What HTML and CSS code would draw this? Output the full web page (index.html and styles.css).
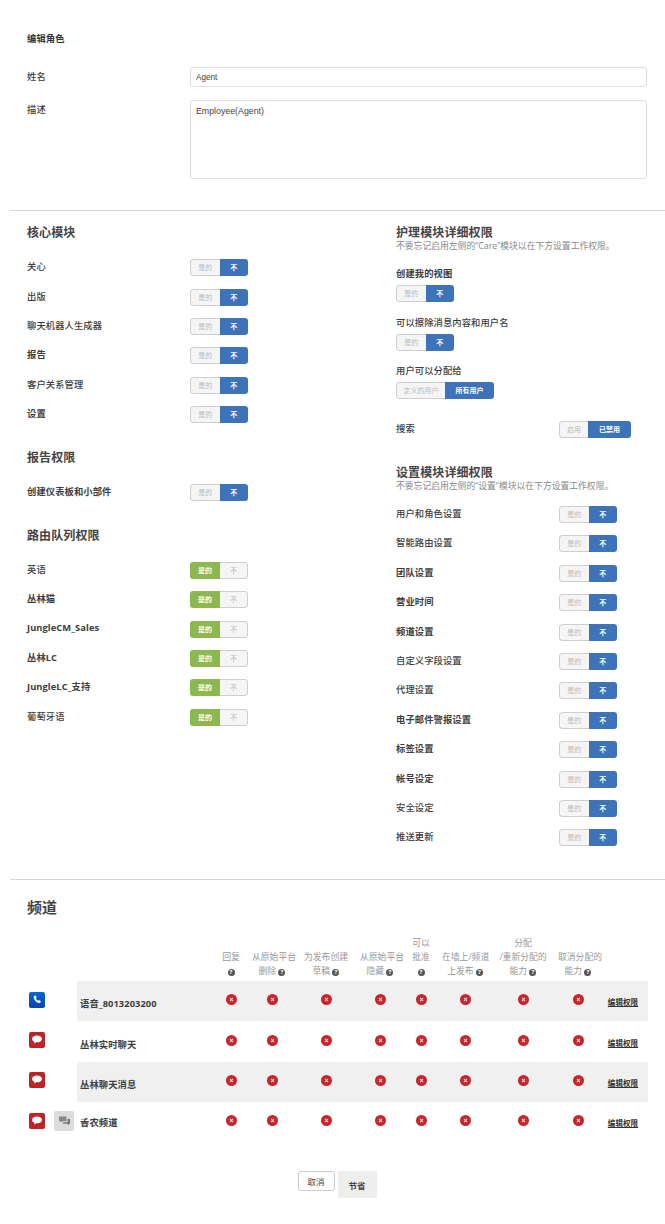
FILE: index.html
```html
<!DOCTYPE html>
<html lang="zh-CN">
<head>
    <meta charset="UTF-8">
    <meta name="viewport" content="width=device-width, initial-scale=1.0">
    <title>编辑角色</title>
    <link rel="stylesheet" href="styles.css">
</head>
<body>
    <div class="role-form">
        <h1 class="page-title">编辑角色</h1>
        <div class="form-row">
            <label>姓名</label>
            <input type="text" value="Agent">
        </div>
        <div class="form-row">
            <label>描述</label>
            <textarea>Employee(Agent)</textarea>
        </div>
    </div>

    <div class="perms">
        <div class="perm-col">
            <div class="group">
                <h2>核心模块</h2>
                <div class="row"><span>关心</span><div class="toggle"><span class="off">是的</span><span class="on">不</span></div></div>
                <div class="row"><span>出版</span><div class="toggle"><span class="off">是的</span><span class="on">不</span></div></div>
                <div class="row"><span>聊天机器人生成器</span><div class="toggle"><span class="off">是的</span><span class="on">不</span></div></div>
                <div class="row"><span class="b">报告</span><div class="toggle"><span class="off">是的</span><span class="on">不</span></div></div>
                <div class="row"><span>客户关系管理</span><div class="toggle"><span class="off">是的</span><span class="on">不</span></div></div>
                <div class="row"><span class="b">设置</span><div class="toggle"><span class="off">是的</span><span class="on">不</span></div></div>
            </div>
            <div class="group">
                <h2>报告权限</h2>
                <div class="row"><span class="b">创建仪表板和小部件</span><div class="toggle"><span class="off">是的</span><span class="on">不</span></div></div>
            </div>
            <div class="group">
                <h2>路由队列权限</h2>
                <div class="row"><span>英语</span><div class="toggle"><span class="yes">是的</span><span class="off">不</span></div></div>
                <div class="row"><span class="b">丛林猫</span><div class="toggle"><span class="yes">是的</span><span class="off">不</span></div></div>
                <div class="row"><span class="b">JungleCM_Sales</span><div class="toggle"><span class="yes">是的</span><span class="off">不</span></div></div>
                <div class="row"><span class="b">丛林LC</span><div class="toggle"><span class="yes">是的</span><span class="off">不</span></div></div>
                <div class="row"><span class="b">JungleLC_支持</span><div class="toggle"><span class="yes">是的</span><span class="off">不</span></div></div>
                <div class="row"><span>葡萄牙语</span><div class="toggle"><span class="yes">是的</span><span class="off">不</span></div></div>
            </div>
        </div>

        <div class="perm-col">
            <h2>护理模块详细权限</h2>
            <p class="hint">不要忘记启用左侧的“Care”模块以在下方设置工作权限。</p>
            <div class="stack first">
                <div class="stack-label b">创建我的视图</div>
                <div class="toggle"><span class="off">是的</span><span class="on">不</span></div>
            </div>
            <div class="stack">
                <div class="stack-label">可以擦除消息内容和用户名</div>
                <div class="toggle"><span class="off">是的</span><span class="on">不</span></div>
            </div>
            <div class="stack">
                <div class="stack-label">用户可以分配给</div>
                <div class="toggle wide"><span class="off">定义的用户</span><span class="on">所有用户</span></div>
            </div>
            <div class="row search-row"><span>搜索</span><div class="toggle mid"><span class="off">启用</span><span class="on">已禁用</span></div></div>

            <h2 class="settings-title">设置模块详细权限</h2>
            <p class="hint">不要忘记启用左侧的“设置”模块以在下方设置工作权限。</p>
            <div class="settings-rows">
                <div class="row"><span>用户和角色设置</span><div class="toggle"><span class="off">是的</span><span class="on">不</span></div></div>
                <div class="row"><span>智能路由设置</span><div class="toggle"><span class="off">是的</span><span class="on">不</span></div></div>
                <div class="row"><span class="b">团队设置</span><div class="toggle"><span class="off">是的</span><span class="on">不</span></div></div>
                <div class="row"><span class="b">营业时间</span><div class="toggle"><span class="off">是的</span><span class="on">不</span></div></div>
                <div class="row"><span class="b">频道设置</span><div class="toggle"><span class="off">是的</span><span class="on">不</span></div></div>
                <div class="row"><span>自定义字段设置</span><div class="toggle"><span class="off">是的</span><span class="on">不</span></div></div>
                <div class="row"><span>代理设置</span><div class="toggle"><span class="off">是的</span><span class="on">不</span></div></div>
                <div class="row"><span class="b">电子邮件警报设置</span><div class="toggle"><span class="off">是的</span><span class="on">不</span></div></div>
                <div class="row"><span class="b">标签设置</span><div class="toggle"><span class="off">是的</span><span class="on">不</span></div></div>
                <div class="row"><span class="b">帐号设定</span><div class="toggle"><span class="off">是的</span><span class="on">不</span></div></div>
                <div class="row"><span>安全设定</span><div class="toggle"><span class="off">是的</span><span class="on">不</span></div></div>
                <div class="row"><span>推送更新</span><div class="toggle"><span class="off">是的</span><span class="on">不</span></div></div>
            </div>
        </div>
    </div>

    <div class="channels">
        <h2 class="channels-title">频道</h2>
        <table>
            <colgroup>
                <col class="c-icon"><col class="c-icon2"><col class="c-name">
                <col class="c-a"><col class="c-b"><col class="c-c"><col class="c-d"><col class="c-e"><col class="c-f"><col class="c-g"><col class="c-h"><col class="c-link">
            </colgroup>
            <thead>
                <tr>
                    <th></th><th></th><th></th>
                    <th>回复<br><i class="q">?</i></th>
                    <th>从原始平台<br>删除 <i class="q">?</i></th>
                    <th>为发布创建<br>草稿 <i class="q">?</i></th>
                    <th>从原始平台<br>隐藏 <i class="q">?</i></th>
                    <th>可以<br>批准<br><i class="q">?</i></th>
                    <th>在墙上/频道<br>上发布 <i class="q">?</i></th>
                    <th>分配<br>/重新分配的<br>能力 <i class="q">?</i></th>
                    <th>取消分配的<br>能力 <i class="q">?</i></th>
                    <th></th>
                </tr>
            </thead>
            <tbody id="channelRows"></tbody>
        </table>
        <div class="actions">
            <button class="btn-cancel">取消</button>
            <button class="btn-save">节省</button>
        </div>
    </div>

    <script src="channels.js"></script>
</body>
</html>
```

FILE: styles.css
```css
* {
    margin: 0;
    padding: 0;
    box-sizing: border-box;
}

body {
    background: #fff;
    color: #3d3d3d;
    font-family: "Open Sans", "Noto Sans CJK SC", sans-serif;
    font-size: 9.3px;
    font-weight: 500;
    letter-spacing: 0.08px;
    padding-left: 10px;
}

.b {
    font-weight: 700;
}

h2 {
    font-size: 12px;
    line-height: 16px;
    font-weight: 700;
    color: #444;
    letter-spacing: 0.1px;
}

.role-form {
    padding: 32px 18px 31px 17px;
    border-bottom: 1px solid #d9d9d9;
}

.page-title {
    font-size: 9.3px;
    line-height: 14px;
    font-weight: 700;
    color: #333;
    margin-bottom: 21px;
}

.form-row {
    display: flex;
    margin-bottom: 13px;
}

.form-row:last-child {
    margin-bottom: 0;
}

.form-row label {
    width: 163px;
    line-height: 20px;
}

.form-row input,
.form-row textarea {
    flex: 1;
    border: 1px solid #ddd;
    border-radius: 3px;
    font-family: "Liberation Sans", Arial, sans-serif;
    color: #444;
    letter-spacing: 0;
    padding: 0 5px;
    resize: none;
    outline: none;
}

.form-row input {
    height: 20px;
    font-size: 8.2px;
}

.form-row textarea {
    height: 79px;
    padding-top: 4px;
    font-size: 8.8px;
    line-height: 12px;
}

.perms {
    display: flex;
    padding: 14px 0 26.5px 17px;
    border-bottom: 1px solid #d9d9d9;
}

.perm-col:first-child {
    width: 369px;
}

.perm-col:last-child {
    width: 235px;
}

.group {
    margin-bottom: 20.5px;
    width: 221px;
}

.group h2 {
    margin-bottom: 12px;
}

.row {
    display: flex;
    align-items: center;
    justify-content: space-between;
    height: 29.4px;
}

.row > span {
    margin-bottom: 3px;
}

.hint {
    font-size: 8.8px;
    line-height: 11px;
    font-weight: 400;
    color: #888;
    white-space: nowrap;
    letter-spacing: 0;
}

.toggle {
    display: inline-flex;
    width: 58px;
    height: 17px;
    border-radius: 3px;
    overflow: hidden;
    font-size: 7px;
    line-height: 17px;
    text-align: center;
    vertical-align: top;
    letter-spacing: 0;
}

.toggle span {
    flex: 1;
    white-space: nowrap;
}

.toggle .off {
    background: #f5f5f5;
    color: #bbb;
    border: 1px solid #cfcfcf;
    line-height: 15px;
    font-weight: 400;
}

.toggle .off:first-child {
    border-right: 0;
    border-radius: 3px 0 0 3px;
}

.toggle .off:last-child {
    border-left: 0;
    border-radius: 0 3px 3px 0;
}

.toggle .on {
    background: #3d74b9;
    color: #fff;
    font-weight: 700;
}

.toggle .yes {
    flex: 0 0 30px;
    background: #8cb84f;
    color: #fff;
    font-weight: 700;
}

.toggle.wide {
    width: 98px;
}

.toggle.wide .off {
    flex: 0 0 49px;
}

.toggle.mid {
    width: 72px;
}

.toggle.mid .off {
    flex: 0 0 29px;
}

.stack {
    margin-top: 13.5px;
}

.stack.first {
    margin-top: 15px;
}

.stack-label {
    line-height: 14px;
    margin-bottom: 4px;
}

.search-row {
    margin-top: 15.5px;
}

.settings-title {
    margin-top: 21.5px;
}

.settings-rows {
    width: 221px;
    margin-top: 7.5px;
}

.channels {
    padding-left: 17px;
}

.channels-title {
    font-size: 15px;
    line-height: 20px;
    padding-top: 17px;
    box-sizing: content-box;
    margin-bottom: 19px;
}

table {
    width: 621px;
    table-layout: fixed;
    border-collapse: collapse;
}

.c-icon { width: 25px; }
.c-icon2 { width: 25px; }
.c-name { width: 133px; }
.c-a { width: 42px; }
.c-b { width: 40px; }
.c-c { width: 68px; }
.c-d { width: 40px; }
.c-e { width: 42px; }
.c-f { width: 46px; }
.c-g { width: 70px; }
.c-h { width: 40px; }
.c-link { width: 50px; }

th {
    font-size: 8.8px;
    line-height: 14px;
    font-weight: 400;
    color: #999;
    vertical-align: bottom;
    white-space: nowrap;
    padding-bottom: 3px;
    letter-spacing: 0;
}

.q {
    display: inline-block;
    width: 7px;
    height: 7px;
    border-radius: 50%;
    background: #555;
    color: #fff;
    font-size: 6px;
    font-style: normal;
    font-weight: 700;
    line-height: 7px;
    text-align: center;
}

td {
    height: 40.3px;
    text-align: center;
    padding-bottom: 3px;
}

tbody tr:nth-child(odd) td.shade {
    background: #f0f0f0;
}

td.icon-cell {
    text-align: left;
    padding: 0 0 3px 2px;
}

td.icon2-cell {
    text-align: left;
    padding-left: 2px;
}

td.name {
    text-align: left;
    font-weight: 700;
    padding: 4px 0 0 3px;
}

tr.has-extra td.name {
    padding-top: 0;
}

.chan-icon {
    display: block;
    width: 16px;
    height: 16px;
}

.chan-icon2 {
    display: block;
    width: 20px;
    height: 20px;
}

.no {
    display: block;
    margin: 0 auto;
    width: 11px;
    height: 11px;
}

td.edit {
    padding: 1px 0 0;
}

td a {
    color: #333;
    font-size: 7.5px;
    font-weight: 600;
    text-decoration: underline;
    white-space: nowrap;
}

.actions {
    display: flex;
    justify-content: center;
    align-items: flex-start;
    gap: 3px;
    margin-top: 29px;
    padding-right: 18px;
}

.actions button {
    font-family: inherit;
    font-size: 8.5px;
    color: #444;
}

.btn-cancel {
    width: 37px;
    height: 20px;
    background: #fff;
    border: 1px solid #ccc;
    border-radius: 3px;
}

.btn-save {
    width: 39px;
    height: 27px;
    background: #eee;
    border: 0;
    font-weight: 700;
}
```

FILE: channels.js
```js
// channel table rows
const channels = [
    { name: '语音_8013203200', icon: 'phone' },
    { name: '丛林实时聊天', icon: 'chat' },
    { name: '丛林聊天消息', icon: 'chat' },
    { name: '香农频道', icon: 'chat', extra: true }
];

const phoneIcon = '<svg class="chan-icon" viewBox="0 0 16 16"><defs><linearGradient id="ph" x1="0" y1="0" x2="0" y2="1"><stop offset="0" stop-color="#0a66dc"/><stop offset="1" stop-color="#0a45a6"/></linearGradient></defs><rect width="16" height="16" rx="2" fill="url(#ph)"/><path d="M5.200 4l1.500-.5 1.100 2.300-.9.8c.4.900 1.100 1.600 2 2.100l.9-.8 2.100 1.300-.6 1.400c-.4.5-1.100.6-1.800.4C7.300 10 5.400 8 4.700 5.900c-.2-.8 0-1.500.5-1.900z" fill="#fff"/></svg>';
const chatIcon = '<svg class="chan-icon" viewBox="0 0 16 16"><rect width="16" height="16" rx="2" fill="#bd2327"/><path d="M8 3.500c2.700 0 5 1.500 5 3.400s-2.300 3.400-5 3.400c-.3 0-.6 0-.9-.1-.6.7-1.400 1.200-2.300 1.300.5-.5.7-1 .7-1.700C4 9.200 3 8.100 3 6.900 3 5 5.300 3.500 8 3.500z" fill="#fff"/></svg>';
const extraIcon = '<svg class="chan-icon2" viewBox="0 0 20 20"><rect width="20" height="20" rx="2" fill="#dcdcdc"/><path d="M5 5.500h7.500v4.800H8.300L6.800 11.600v-1.300H5z" fill="#888"/><path d="M13.500 8h2.500v4.800h-1v1.400l-1.700-1.400H9v-1.500h4.500z" fill="#777"/></svg>';
const noIcon = '<svg class="no" viewBox="0 0 10 10"><circle cx="5" cy="5" r="5" fill="#c8242b"/><path d="M3.600 3.600l2.800 2.800M6.400 3.600l-2.800 2.800" stroke="#f3d5d5" stroke-width="1"/></svg>';

const tbody = document.getElementById('channelRows');

channels.forEach(function (c) {
    let html = '<tr' + (c.extra ? ' class="has-extra"' : '') + '>';
    html += '<td class="icon-cell">' + (c.icon === 'phone' ? phoneIcon : chatIcon) + '</td>';
    html += '<td class="icon2-cell">' + (c.extra ? extraIcon : '') + '</td>';
    html += '<td class="name shade">' + c.name + '</td>';
    for (let i = 0; i < 8; i++) {
        html += '<td class="shade">' + noIcon + '</td>';
    }
    html += '<td class="shade edit"><a href="#">编辑权限</a></td></tr>';
    tbody.insertAdjacentHTML('beforeend', html);
});
```
